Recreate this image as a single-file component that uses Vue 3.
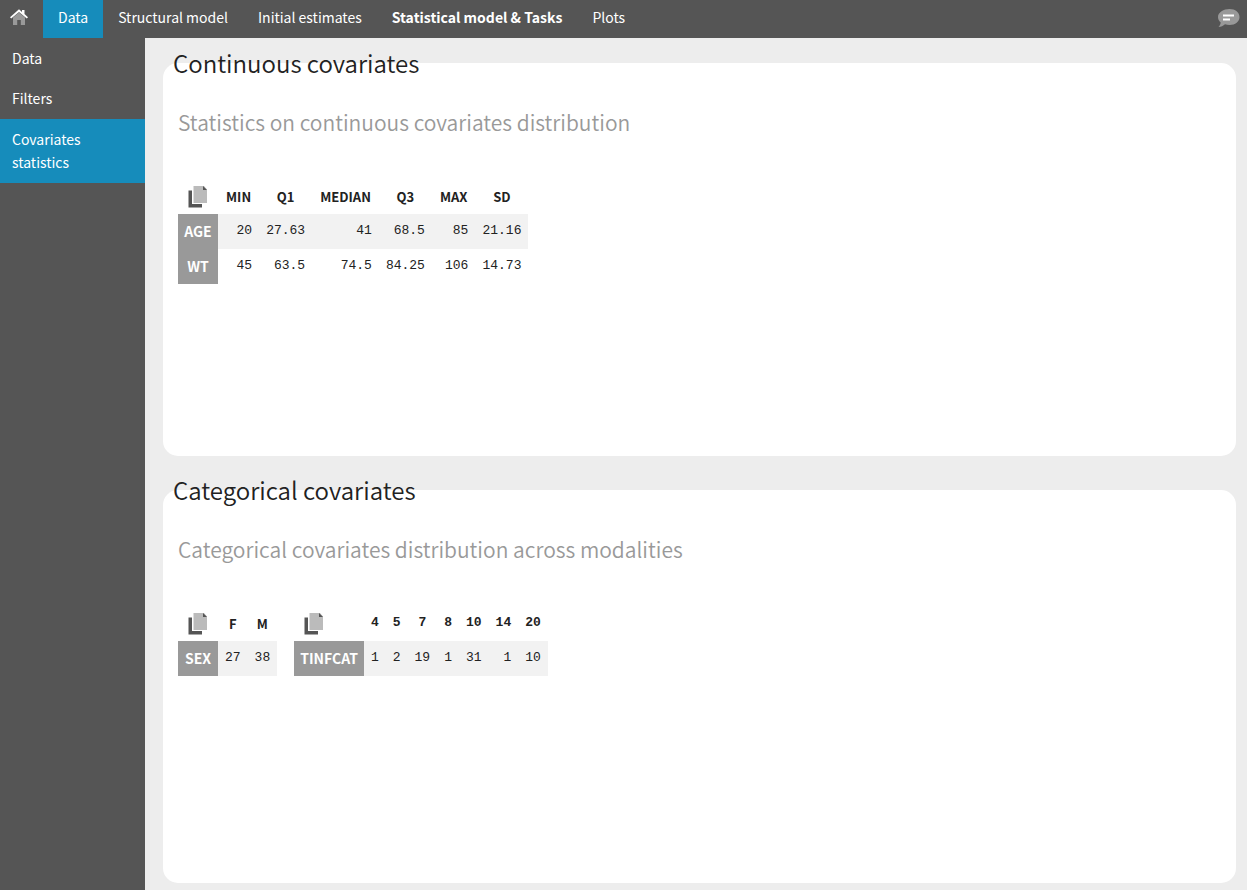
<script setup>
const tabs = [
  { label: 'Data', active: true },
  { label: 'Structural model' },
  { label: 'Initial estimates' },
  { label: 'Statistical model & Tasks', strong: true },
  { label: 'Plots' },
]

const sections = [
  { label: 'Data' },
  { label: 'Filters' },
  { label: 'Covariates statistics', active: true },
]

const panels = [
  {
    title: 'Continuous covariates',
    subtitle: 'Statistics on continuous covariates distribution',
    tables: [
      {
        columns: ['MIN', 'Q1', 'MEDIAN', 'Q3', 'MAX', 'SD'],
        rows: [
          { name: 'AGE', values: ['20', '27.63', '41', '68.5', '85', '21.16'] },
          { name: 'WT', values: ['45', '63.5', '74.5', '84.25', '106', '14.73'] },
        ],
      },
    ],
  },
  {
    title: 'Categorical covariates',
    subtitle: 'Categorical covariates distribution across modalities',
    tables: [
      { columns: ['F', 'M'], rows: [{ name: 'SEX', values: ['27', '38'] }] },
      {
        numeric: true,
        columns: ['4', '5', '7', '8', '10', '14', '20'],
        rows: [{ name: 'TINFCAT', values: ['1', '2', '19', '1', '31', '1', '10'] }],
      },
    ],
  },
]
</script>

<template>
  <div class="app">
    <header class="topbar">
      <a class="home" href="#" aria-label="Home">
        <svg width="18" height="16" viewBox="0 0 18 16" aria-hidden="true">
          <path d="M3 8.5 9 3.5l6 5V16h-4.200v-5H7.200v5H3z" fill="#999" />
          <path d="M0 8.200 9 .3l3 2.600V1h2.500v4.100L18 8.200l-1.200 1.300L9 2.900 1.200 9.500z" fill="#fff" />
        </svg>
      </a>
      <nav class="tabs" aria-label="Main">
        <a
          v-for="tab in tabs"
          :key="tab.label"
          href="#"
          class="tab"
          :class="{ active: tab.active, strong: tab.strong }"
        >{{ tab.label }}</a>
      </nav>
      <button class="comment" type="button" aria-label="Comments">
        <svg width="22" height="20" viewBox="0 0 22 20" aria-hidden="true">
          <path d="M11.500 1C17.300 1 21.500 4.300 21.500 9s-4.200 8-10 8c-1.700 0-3.200-.3-4.500-.8C5.300 17.600 3 18.900.5 19c1.200-1.200 2-2.700 2.200-4.500C.9 13 0 11.200 0 9c0-4.700 5.700-8 11.500-8z" fill="#999" />
          <path d="M5 7.500h11M5 11.500h7" stroke="#fff" stroke-width="2" />
        </svg>
      </button>
    </header>

    <div class="body">
      <nav class="sidebar" aria-label="Data sections">
        <a
          v-for="item in sections"
          :key="item.label"
          href="#"
          class="side-item"
          :class="{ active: item.active }"
        >{{ item.label }}</a>
      </nav>

      <main class="content">
        <section v-for="panel in panels" :key="panel.title" class="panel">
          <h2 class="title">{{ panel.title }}</h2>
          <h3 class="subtitle">{{ panel.subtitle }}</h3>
          <div class="tables">
            <table v-for="table in panel.tables" :key="table.rows[0].name" :class="{ numeric: table.numeric }">
              <thead>
                <tr>
                  <td class="corner">
                    <button class="copy" type="button" aria-label="Copy table">
                      <svg width="20" height="22" viewBox="0 0 20 22" aria-hidden="true">
                        <path d="M.5 4.500H4V18h10v3.500H.5z" fill="#555" />
                        <path d="M5.500 0H16l3 3.500V17H5.500z" fill="#bbb" />
                        <path d="M15 0 19 4h-4z" fill="#555" />
                      </svg>
                    </button>
                  </td>
                  <th v-for="column in table.columns" :key="column" scope="col">{{ column }}</th>
                </tr>
              </thead>
              <tbody>
                <tr v-for="row in table.rows" :key="row.name">
                  <th scope="row">{{ row.name }}</th>
                  <td v-for="(value, i) in row.values" :key="i">{{ value }}</td>
                </tr>
              </tbody>
            </table>
          </div>
        </section>
      </main>
    </div>
  </div>
</template>

<style>
body {
  margin: 0;
}
</style>

<style scoped>
.app {
  display: flex;
  flex-direction: column;
  min-height: 100vh;
  background: #ededed;
  color: #222;
  font-family: "Noto Sans CJK SC", "Open Sans", sans-serif;
  font-size: 14px;
}

a {
  color: #fff;
  text-decoration: none;
}

button {
  display: block;
  padding: 0;
  border: 0;
  background: none;
  cursor: pointer;
}

svg {
  display: block;
}

.topbar {
  display: flex;
  height: 38px;
  background: #555;
}

.home {
  box-sizing: border-box;
  width: 43px;
  padding: 9px 10px;
}

.tabs {
  display: flex;
  flex: 1;
}

.tab {
  padding: 0 15px;
  line-height: 35px;
  white-space: nowrap;
}

.tab.active,
.side-item.active {
  background: #168cbb;
}

.strong {
  font-weight: 700;
}

.comment {
  align-self: flex-start;
  margin: 8px 7px 0 0;
}

.body {
  display: flex;
  flex: 1;
}

.sidebar {
  box-sizing: border-box;
  flex: none;
  width: 145px;
  padding-top: 1px;
  background: #555;
}

.side-item {
  display: block;
  padding: 8px 40px 9px 12px;
  line-height: 23px;
}

.side-item.active {
  padding-top: 9px;
}

.content {
  display: flex;
  flex: 1;
  flex-direction: column;
  gap: 34px;
  min-width: 0;
  padding: 25px 11px 7px 18px;
}

.panel {
  flex: 1;
  padding: 0 15px 20px;
  border-radius: 15px;
  background: #fff;
}

.title,
.subtitle {
  margin: 0;
  font-weight: 350;
}

.title {
  margin: -18px 0 0 -5px;
  font-size: 24px;
  line-height: 36px;
}

.subtitle {
  margin-top: 24px;
  color: #999;
  font-size: 21px;
  line-height: 34px;
}

.tables {
  display: flex;
  flex-wrap: wrap;
  align-items: flex-start;
  gap: 17px;
  margin-top: 40px;
}

table {
  border-collapse: collapse;
}

th,
td {
  height: 35px;
  padding: 0 7px;
  box-sizing: border-box;
  line-height: 35px;
}

thead th {
  padding: 0 8px;
  font-size: 13px;
  font-weight: 700;
  text-align: center;
}

.numeric thead th {
  padding: 0 7px;
  font-family: "Liberation Mono", monospace;
  line-height: 34px;
  vertical-align: top;
}

.corner {
  padding: 7px 10px 0;
  vertical-align: top;
}

tbody th {
  padding: 0 6px;
  background: #999;
  color: #fff;
  font-size: 14px;
  font-weight: 700;
}

tbody td {
  font-family: "Liberation Mono", monospace;
  font-size: 13px;
  line-height: 34px;
  text-align: right;
  vertical-align: top;
}

tbody tr:nth-child(odd) {
  background: #f2f2f2;
}
</style>
